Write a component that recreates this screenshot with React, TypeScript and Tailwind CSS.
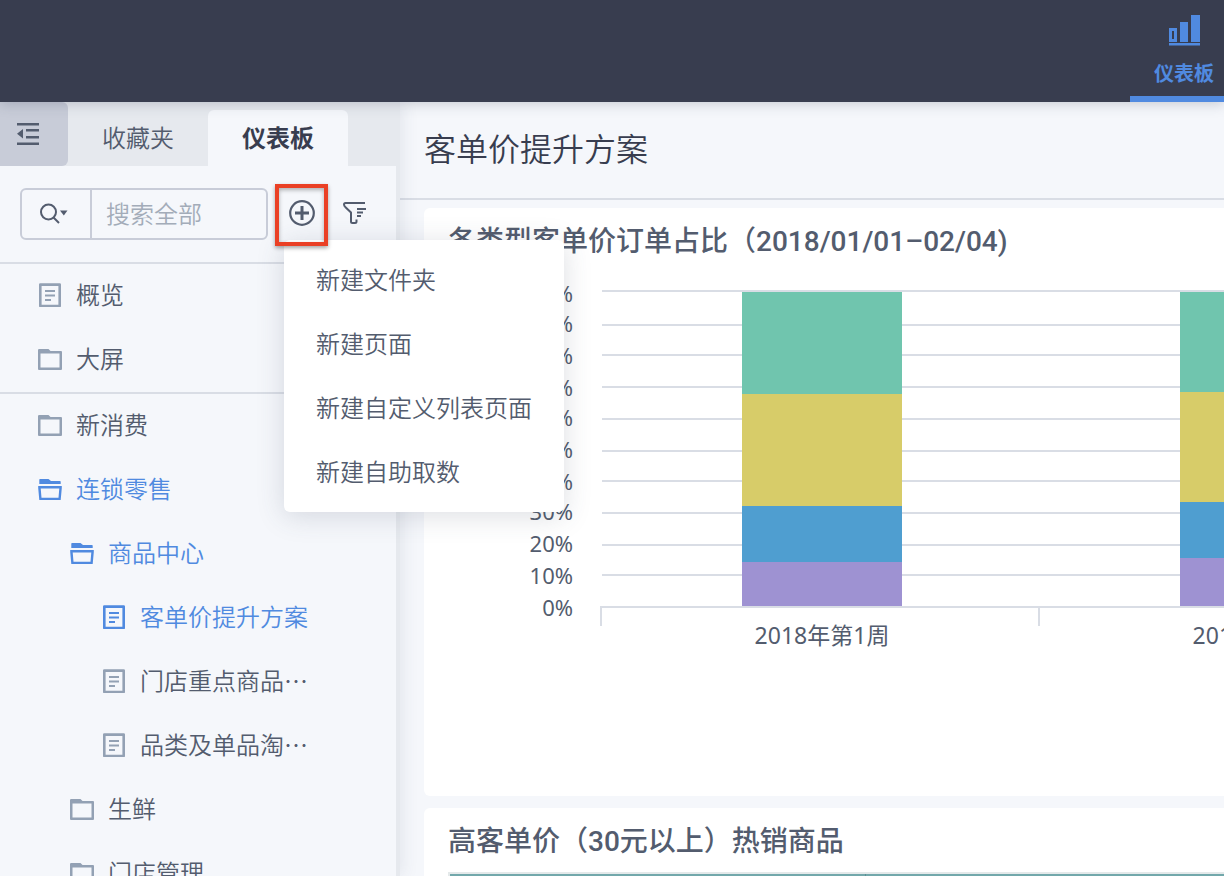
import { useState } from "react";
import clsx from "clsx";

type IconName = "page" | "folder" | "folderOpen";

type TreeItem = {
  label: string;
  icon: IconName;
  depth: number;
  active?: boolean;
};

const pinnedItems: TreeItem[] = [
  { label: "概览", icon: "page", depth: 0 },
  { label: "大屏", icon: "folder", depth: 0 },
];

const treeItems: TreeItem[] = [
  { label: "新消费", icon: "folder", depth: 0 },
  { label: "连锁零售", icon: "folderOpen", depth: 0, active: true },
  { label: "商品中心", icon: "folderOpen", depth: 1, active: true },
  { label: "客单价提升方案", icon: "page", depth: 2, active: true },
  { label: "门店重点商品⋯", icon: "page", depth: 2 },
  { label: "品类及单品淘⋯", icon: "page", depth: 2 },
  { label: "生鲜", icon: "folder", depth: 1 },
  { label: "门店管理", icon: "folder", depth: 1 },
];

const createOptions = ["新建文件夹", "新建页面", "新建自定义列表页面", "新建自助取数"];

const depthPadding = ["pl-[38px]", "pl-[70px]", "pl-[102px]"];

function TreeIcon({ name }: { name: IconName }) {
  if (name === "page") {
    return (
      <svg width="24" height="24" viewBox="0 0 24 24" fill="none" stroke="currentColor" strokeWidth="2.2">
        <rect x="2.3" y="1.6" width="19.4" height="21.4" strokeWidth="2.6" strokeLinejoin="round" />
        <path d="M7 8h10M7 12.500h10M7 17h6" />
      </svg>
    );
  }
  if (name === "folder") {
    return (
      <svg width="24" height="24" viewBox="0 0 24 24" fill="currentColor">
        <path
          fillRule="evenodd"
          d="M1.200 2H10.500L12.500 4H23q1 0 1 1V22q0 1-1 1H1q-1 0-1-1V3q0-1 1.200-1ZM2.500 6.500V20.600H21.500V6.500Z"
        />
      </svg>
    );
  }
  return (
    <svg width="24" height="24" viewBox="0 0 24 24" fill="currentColor">
      <path d="M2 2H10.500L13 4H22q.7 0 .7.700V7H1.300V2.700Q1.300 2 2 2Z" />
      <path fillRule="evenodd" d="M.2 9H23.800V11L22.700 23H1.300L.2 11ZM2.700 11.500L3.500 20.700H20.500L21.300 11.500Z" />
    </svg>
  );
}

function TreeRow({ item }: { item: TreeItem }) {
  return (
    <li>
      <a
        href="#"
        className={clsx(
          "flex h-16 items-center gap-[14px] pb-0.5",
          depthPadding[item.depth],
          item.active ? "text-[#508ae0]" : "text-[#535c6e]",
        )}
      >
        <span className={item.active ? "text-[#508ae0]" : "text-[#93a1b4]"}>
          <TreeIcon name={item.icon} />
        </span>
        <span className="pb-0.5 whitespace-nowrap">{item.label}</span>
      </a>
    </li>
  );
}

function CreateMenu() {
  return (
    <ul className="absolute top-[56px] left-[9px] z-20 w-[280px] rounded-md bg-white py-2 shadow-[0_4px_28px_rgba(60,72,95,0.18)]">
      {createOptions.map((option) => (
        <li key={option}>
          <button type="button" className="h-16 w-full px-8 pb-0.5 text-left whitespace-nowrap">
            {option}
          </button>
        </li>
      ))}
    </ul>
  );
}

function Sidebar() {
  const [menuOpen, setMenuOpen] = useState(true);

  return (
    <aside className="relative z-10 flex w-[400px] shrink-0 flex-col border-r-4 border-[#e6e9ee] bg-[#f5f7fb] text-2xl font-[350] text-[#535c6e] shadow-[2px_0_16px_rgba(60,72,95,0.10)]">
      <div className="flex h-16 shrink-0 bg-[#e6e9ee]">
        <button type="button" aria-label="收起" className="w-[68px] rounded-r-md bg-[#c8ccd8] pl-4">
          <svg width="24" height="24" viewBox="0 0 24 24" fill="#535c6e">
            <path d="M1 1h22v2.400H1zM10 7h13v2.400H10zM10 14h13v2.400H10zM1 20.500h22v2.400H1zM1 11.800L7 7v9.600z" />
          </svg>
        </button>
        <button type="button" className="w-[140px] pt-1.5">
          收藏夹
        </button>
        <button
          type="button"
          className="mt-2 w-[140px] rounded-t-md bg-[#f5f7fb] pb-0.5 font-bold text-[#383d4f]"
        >
          仪表板
        </button>
      </div>

      <div className="flex h-[98px] shrink-0 items-center border-b-2 border-[#d9dde5] pl-5">
        <div className="flex h-[52px] w-[248px] rounded-md border-2 border-[#c8ccd8]">
          <button
            type="button"
            aria-label="搜索范围"
            className="flex w-[70px] shrink-0 items-center justify-center border-r-2 border-[#c8ccd8] pr-1"
          >
            <svg width="28" height="22" viewBox="0 0 28 22" fill="none" stroke="#535c6e" strokeWidth="2">
              <circle cx="8.500" cy="9" r="7.500" />
              <path d="M13.500 14.500l5.500 5.500" />
              <path d="M20 7.500h7.500l-3.700 5z" fill="#535c6e" stroke="none" />
            </svg>
          </button>
          <input
            type="text"
            aria-label="搜索"
            placeholder="搜索全部"
            className="w-full min-w-0 bg-transparent px-[14px] pb-0.5 outline-none placeholder:text-[#a3acb9]"
          />
        </div>
        <div className="relative mt-0.5 ml-[7px]">
          <button
            type="button"
            aria-label="新建"
            onClick={() => setMenuOpen(!menuOpen)}
            className="relative z-30 flex h-[62px] w-[53px] items-center justify-center border-4 border-[#ea4025] pb-1 shadow-[0_2px_4px_rgba(0,0,0,0.35),inset_0_2px_4px_rgba(0,0,0,0.3)]"
          >
            <svg width="26" height="26" viewBox="0 0 26 26" fill="none" stroke="#535c6e">
              <circle cx="13" cy="13" r="11.800" strokeWidth="2.200" />
              <path d="M13 6v14M6 13h14" strokeWidth="3" />
            </svg>
          </button>
          {menuOpen && <CreateMenu />}
        </div>
        <button type="button" aria-label="筛选" className="ml-[15px] pb-0.5">
          <svg width="24" height="24" viewBox="0 0 24 24" fill="none" stroke="#535c6e" strokeWidth="2">
            <path
              d="M22 2H2.500Q1 2 1 3.500Q1 5 2.500 6.200L8 11.500V20.500Q8 22 9.500 22H12Q13.500 22 13.500 20.500V18.500"
              strokeLinejoin="round"
            />
            <path d="M14 8h9M14 11.500h6M14 15h4" />
          </svg>
        </button>
      </div>

      <ul className="shrink-0 border-b-2 border-[#d9dde5]">
        {pinnedItems.map((item) => (
          <TreeRow key={item.label} item={item} />
        ))}
      </ul>
      <ul className="shrink-0">
        {treeItems.map((item) => (
          <TreeRow key={item.label} item={item} />
        ))}
      </ul>
    </aside>
  );
}

const axisTicks = [
  { label: "100%", line: 18, text: 30 },
  { label: "90%", line: 52, text: 60 },
  { label: "80%", line: 82, text: 92 },
  { label: "70%", line: 114, text: 124 },
  { label: "60%", line: 146, text: 154 },
  { label: "50%", line: 178, text: 186 },
  { label: "40%", line: 208, text: 218 },
  { label: "30%", line: 240, text: 248 },
  { label: "20%", line: 272, text: 280 },
  { label: "10%", line: 302, text: 312 },
  { label: "0%", line: 334, text: 344 },
];

const segmentColors = ["#70c5ae", "#d7cc69", "#4f9ed0", "#9e92d2"];

const bars = [
  { label: "2018年第1周", x: 318, stops: [20, 122, 234, 290, 334] },
  { label: "2018年第2周", x: 756, stops: [20, 120, 230, 286, 334] },
];

function StackedChart() {
  return (
    <svg className="block w-full" height="380" fontFamily="'Noto Sans', 'Noto Sans CJK SC', sans-serif">
      {axisTicks.map((tick) => (
        <g key={tick.label}>
          <rect x="178" y={tick.line} width="100%" height="2" fill="#d9dde5" />
          <text x="149" y={tick.text} textAnchor="end" fontSize="22" fill="#535c6e">
            {tick.label}
          </text>
        </g>
      ))}
      <path d="M176 334h2v20h-2zM614 334h2v20h-2z" fill="#d9dde5" />
      {bars.map((bar) => (
        <g key={bar.label}>
          {segmentColors.map((color, i) => (
            <rect
              key={color}
              x={bar.x}
              y={bar.stops[i]}
              width="160"
              height={bar.stops[i + 1] - bar.stops[i]}
              fill={color}
            />
          ))}
          <text x={bar.x + 80} y="372" textAnchor="middle" fontSize="23" fill="#535c6e">
            {bar.label}
          </text>
        </g>
      ))}
    </svg>
  );
}

export default function App() {
  return (
    <div className="flex h-screen flex-col overflow-hidden bg-[#f5f7fb] font-['Noto_Sans_CJK_SC',sans-serif]">
      <header className="relative z-30 flex h-[102px] shrink-0 justify-end bg-[#383d4f] shadow-[0_2px_12px_rgba(60,72,95,0.25)]">
        <a
          href="#"
          className="-mr-[14px] flex w-[108px] flex-col items-center border-b-[6px] border-[#508ae0] pt-[14px] text-xl font-bold text-[#508ae0]"
        >
          <svg width="32" height="32" viewBox="0 0 32 32" fill="currentColor">
            <path fillRule="evenodd" d="M1 14h8v14H1zM4 17v8h2v-8z" />
            <path d="M12 8h8v20h-8zM23 1h9v27h-9zM1 29h31v2.500H1z" />
          </svg>
          <span className="mt-3 leading-[30px]">仪表板</span>
        </a>
      </header>

      <div className="flex min-h-0 flex-1">
        <Sidebar />
        <main className="min-w-0 flex-1 overflow-hidden">
          <h1 className="flex h-[98px] items-center border-b-2 border-[#d9dde5] pb-1.5 pl-6 text-[32px] font-[350] text-[#383d4f]">
            客单价提升方案
          </h1>
          <div className="flex flex-col gap-3 pt-2 pl-6">
            <section className="h-[588px] rounded-l-md bg-white">
              <h2 className="h-16 pl-6 text-[28px] leading-[62px] font-medium whitespace-nowrap text-[#535c6e]">
                各类型客单价订单占比（<span className="font-['Roboto']">2018/01/01–02/04)</span>
              </h2>
              <StackedChart />
            </section>
            <section className="h-[588px] rounded-l-md bg-white">
              <h2 className="h-16 pl-6 text-[28px] leading-[62px] font-medium whitespace-nowrap text-[#535c6e]">
                高客单价（<span className="font-['Roboto']">30</span>元以上）热销商品
              </h2>
              <div className="ml-6 flex h-12 border-t-2 border-l-2 border-[#e4e9ea] bg-[#72a8ab]">
                <div className="w-[416px] border-r border-[#5a8f94]" />
              </div>
            </section>
          </div>
        </main>
      </div>
    </div>
  );
}
